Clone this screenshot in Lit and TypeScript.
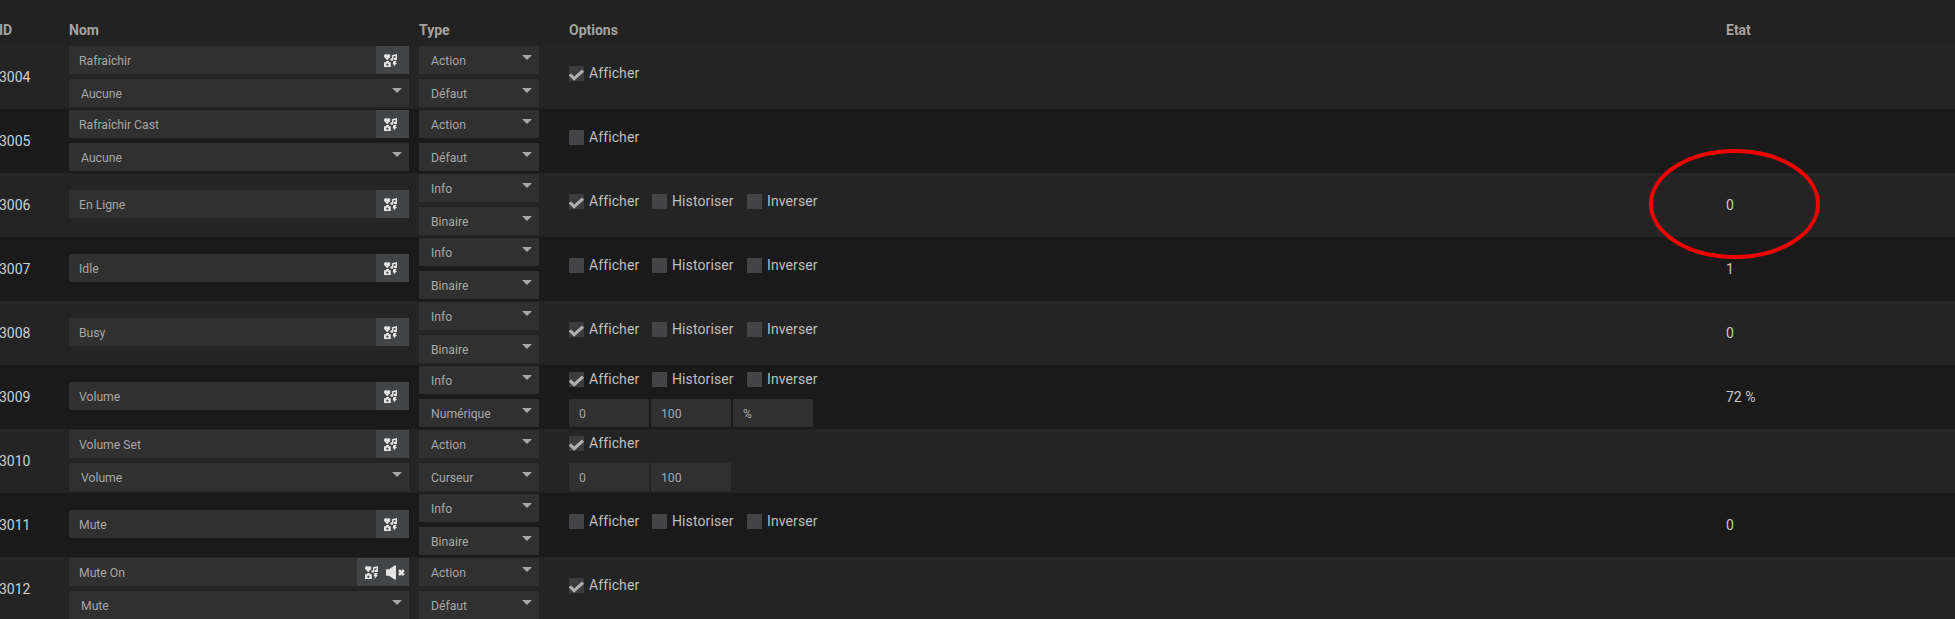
import { LitElement, html, css, svg } from "lit";
import { customElement } from "lit/decorators.js";

type Row = {
  id: string; name: string; sub?: string; t1: string; t2: string;
  show: boolean; extra?: boolean; inputs?: string[]; state?: string; mute?: boolean;
};

const rows: Row[] = [
  { id: "3004", name: "Rafraîchir", sub: "Aucune", t1: "Action", t2: "Défaut", show: true },
  { id: "3005", name: "Rafraîchir Cast", sub: "Aucune", t1: "Action", t2: "Défaut", show: false },
  { id: "3006", name: "En Ligne", t1: "Info", t2: "Binaire", show: true, extra: true, state: "0" },
  { id: "3007", name: "Idle", t1: "Info", t2: "Binaire", show: false, extra: true, state: "1" },
  { id: "3008", name: "Busy", t1: "Info", t2: "Binaire", show: true, extra: true, state: "0" },
  { id: "3009", name: "Volume", t1: "Info", t2: "Numérique", show: true, extra: true, inputs: ["0", "100", "%"], state: "72 %" },
  { id: "3010", name: "Volume Set", sub: "Volume", t1: "Action", t2: "Curseur", show: true, inputs: ["0", "100"] },
  { id: "3011", name: "Mute", t1: "Info", t2: "Binaire", show: false, extra: true, state: "0" },
  { id: "3012", name: "Mute On", sub: "Mute", t1: "Action", t2: "Défaut", show: true, mute: true },
];

const iconGrid = svg`<svg class="ico" width="13" height="13" viewBox="0 0 13 13" fill="currentColor">
  <path d="M3.2 6.2 L0.2 3 Q-0.5 0.8 1.2 0.2 Q2.5 -0.2 3.2 1 Q3.9 -0.2 5.2 0.2 Q6.9 0.8 6.2 3 Z"/>
  <path d="M8 1.2 L13 0 V4.8 A1.6 1.3 0 1 1 11.6 3.6 V2 L9.4 2.6 V5.4 A1.6 1.3 0 1 1 8 4.2 Z"/>
  <path d="M0 8.2 H1.8 L2.5 7 H4.7 L5.4 8.2 H6.8 V13 H0 Z M3.4 9.6 A1.1 1.1 0 1 0 3.41 9.6 Z" fill-rule="evenodd"/>
  <path d="M9.4 7 H12.6 L11.5 9 H13 L9.6 13 L10.3 10.4 H8.6 Z"/>
</svg>`;

const iconMute = svg`<svg class="ico" width="19" height="15" viewBox="0 0 19 15" fill="currentColor">
  <path d="M0 4.2 H3 L8.6 0.4 H10 V14.6 H8.6 L3 10.8 H0 Z"/>
  <path d="M13 5.2 L17.8 10 M17.8 5.2 L13 10" stroke="currentColor" stroke-width="2.6" fill="none"/>
</svg>`;

const check = svg`<svg class="check" width="15" height="15" viewBox="0 0 15 15" fill="none" stroke="currentColor" stroke-width="3.2">
  <path d="M0.8 8.4 L5.2 12.6 L14 4.6"/>
</svg>`;

@customElement("app-root")
export class AppRoot extends LitElement {
  static styles = css`
    :host {
      display: block;
      position: relative;
      height: 619px;
      overflow: hidden;
      background: #222222;
      font-family: Roboto, "Liberation Sans", sans-serif;
      font-size: 14px;
      color: #c4c4c4;
    }
    .row {
      display: grid;
      grid-template-columns: 69px 350px 150px 1157px 229px;
      height: 64px;
      background: #242424;
    }
    .row:nth-child(odd) { background: #1a1a1a; }
    .row.head {
      height: 45px;
      background: #222222;
      font-weight: 700;
      color: #a3a3a3;
      align-items: start;
      line-height: 16px;
    }
    .head > div { padding-top: 22px; }
    .id { margin-left: -1px; }
    .cell-id, .cell-state { display: flex; align-items: center; }
    .cell-id { margin-left: -1px; color: #cfcfcf; }
    .cell-state { color: #c8c8c8; font-size: 14px; }
    .stack {
      display: flex;
      flex-direction: column;
      gap: 5px;
      padding-top: 1px;
    }
    .name { padding-right: 10px; }
    .name.single { padding-top: 17px; }
    .type { padding-right: 30px; }
    .input, .select {
      height: 28px;
      box-sizing: border-box;
      background: #303030;
      color: #a6a6a6;
      font-size: 12.2px;
      display: flex;
      align-items: center;
      position: relative;
      flex: none;
    }
    .input { padding-left: 10px; }
    .input .label { flex: 1; padding-top: 1px; }
    .btn {
      align-self: stretch;
      background: #434446;
      color: #e4e4e4;
      display: flex;
      align-items: center;
      gap: 8px;
      width: 33px;
      padding-left: 8px;
      box-sizing: border-box;
    }
    .btn.wide { width: 52px; }
    .ico { display: block; }
    .select { padding-left: 12px; padding-top: 1px; }
    .arrow {
      position: absolute;
      top: 9px;
      right: 7px;
      width: 0;
      height: 0;
      border-left: 5px solid transparent;
      border-right: 5px solid transparent;
      border-top: 5px solid #a8a8a8;
    }
    .opts { padding-top: 21px; }
    .opts.two { padding-top: 7px; }
    .line {
      display: flex;
      align-items: center;
      height: 15px;
      line-height: 15px;
      color: #bfbfbf;
      letter-spacing: 0.1px;
    }
    .opt { display: flex; align-items: center; gap: 5px; }
    .opt.o1 { width: 83px; }
    .opt.o2 { width: 95px; }
    .box {
      width: 15px;
      height: 15px;
      background: #444446;
      color: #b0b0b0;
      flex: none;
    }
    .box.on { background: #3c3c3c; }
    .check { display: block; }
    .nums { display: flex; gap: 2px; margin-top: 12px; }
    .num {
      width: 80px;
      height: 28px;
      background: #303030;
      color: #a6a6a6;
      font-size: 12.2px;
      display: flex;
      align-items: center;
      padding: 1px 0 0 10px;
      box-sizing: border-box;
    }
    .ellipse {
      position: absolute;
      left: 1649px;
      top: 149px;
      pointer-events: none;
    }
  `;

  private opt(label: string, on: boolean, cls: string) {
    return html`<label class="opt ${cls}">
      <span class="box ${on ? "on" : ""}">${on ? check : ""}</span>${label}
    </label>`;
  }

  private renderRow(r: Row) {
    return html`<div class="row">
      <div class="cell-id">${r.id}</div>
      <div class="stack name ${r.sub ? "" : "single"}">
        <div class="input">
          <span class="label">${r.name}</span>
          <span class="btn ${r.mute ? "wide" : ""}">${iconGrid}${r.mute ? iconMute : ""}</span>
        </div>
        ${r.sub ? html`<div class="select">${r.sub}<span class="arrow"></span></div>` : ""}
      </div>
      <div class="stack type">
        <div class="select">${r.t1}<span class="arrow"></span></div>
        <div class="select">${r.t2}<span class="arrow"></span></div>
      </div>
      <div class="opts ${r.inputs ? "two" : ""}">
        <div class="line">
          ${this.opt("Afficher", r.show, "o1")}
          ${r.extra ? html`${this.opt("Historiser", false, "o2")}${this.opt("Inverser", false, "")}` : ""}
        </div>
        ${r.inputs ? html`<div class="nums">${r.inputs.map((v) => html`<div class="num">${v}</div>`)}</div>` : ""}
      </div>
      <div class="cell-state">${r.state ?? ""}</div>
    </div>`;
  }

  render() {
    return html`
      <div class="table">
        <div class="row head">
          <div class="id">ID</div><div>Nom</div><div>Type</div><div>Options</div><div>Etat</div>
        </div>
        ${rows.map((r) => this.renderRow(r))}
      </div>
      <svg class="ellipse" width="171" height="110" viewBox="0 0 171 110">
        <ellipse cx="85.5" cy="55" rx="83.5" ry="53" fill="none" stroke="#f00000" stroke-width="4"></ellipse>
      </svg>
    `;
  }
}
